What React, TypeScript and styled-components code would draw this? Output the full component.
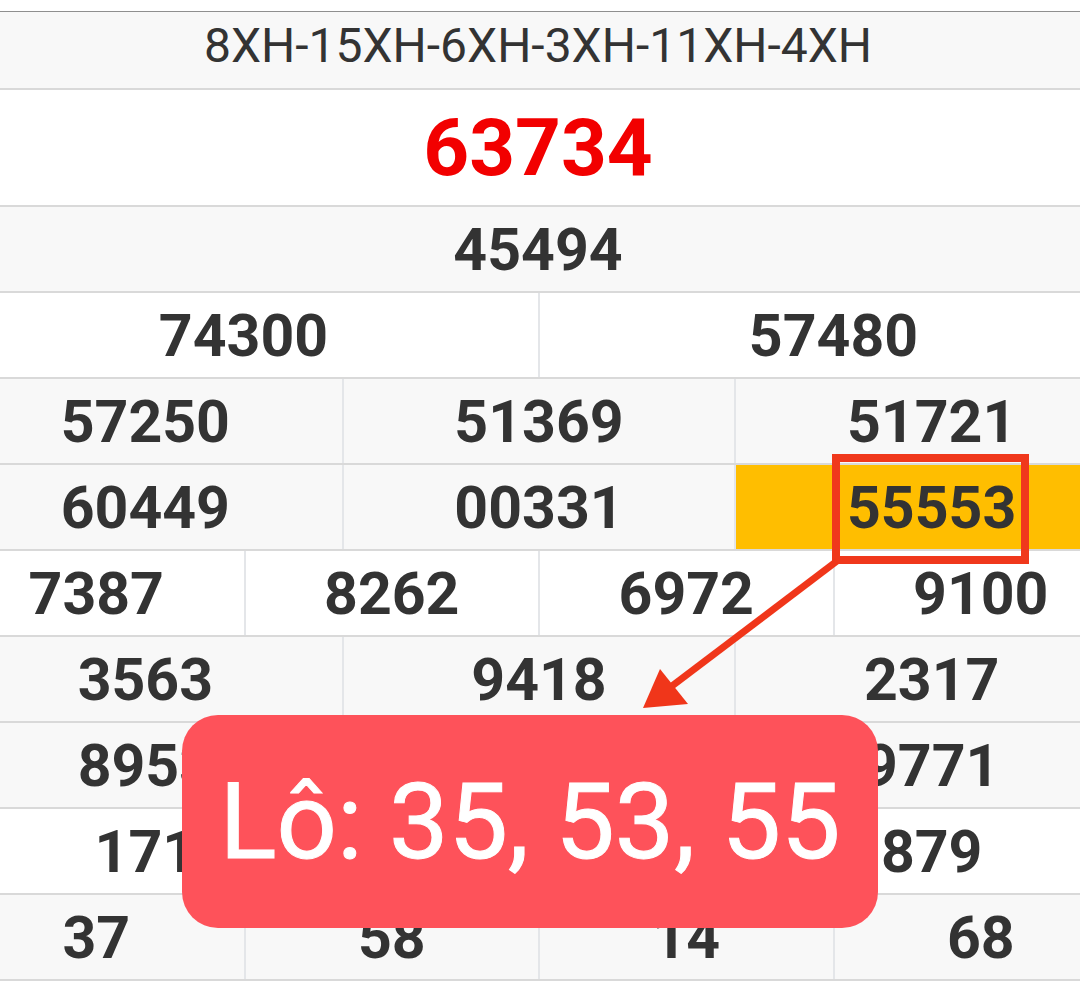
import styled, { createGlobalStyle } from 'styled-components';

const GlobalStyle = createGlobalStyle`
  html, body {
    margin: 0;
    padding: 0;
    background: #ffffff;
  }
  * {
    box-sizing: border-box;
  }
`;

const S = {
  Screen: styled.div`
    position: relative;
    width: 1080px;
    height: 987px;
    overflow: hidden;
    background-color: #ffffff;
    font-family: Roboto, 'Noto Sans', 'Liberation Sans', sans-serif;
    color: #333333;
  `,

  TopGap: styled.div`
    height: 12px;
    border-bottom: 1px solid #8f8f8f;
  `,

  Table: styled.div`
    display: flex;
    flex-direction: column;
    width: 1178px;
    margin-left: -51px;
  `,

  CodeRow: styled.div`
    display: flex;
    justify-content: center;
    align-items: center;
    height: 78px;
    padding-bottom: 10px;
    border-bottom: 2px solid #d9d9d9;
    background-color: #f8f8f8;
    font-size: 48px;
    font-weight: 400;
    color: #333333;
  `,

  SpecialRow: styled.div`
    display: flex;
    justify-content: center;
    align-items: center;
    height: 117px;
    border-bottom: 2px solid #d9d9d9;
    background-color: #ffffff;
    font-size: 80px;
    font-weight: 700;
    color: #f20000;
  `,

  Row: styled.div<{ $cols: number; $gray: boolean }>`
    display: grid;
    grid-template-columns: repeat(${({ $cols }) => $cols}, 1fr);
    height: 86px;
    border-bottom: 2px solid #d9d9d9;
    background-color: ${({ $gray }) => ($gray ? '#f8f8f8' : '#ffffff')};
  `,

  Cell: styled.div<{ $hit?: boolean }>`
    display: flex;
    justify-content: center;
    align-items: center;
    font-size: 59px;
    font-weight: 700;
    color: #333333;
    background-color: ${({ $hit }) => ($hit ? '#ffbe00' : 'transparent')};

    &:not(:first-child) {
      border-left: 2px solid #e4e6e9;
    }
  `,

  MarkBox: styled.div`
    position: absolute;
    left: 832px;
    top: 454px;
    width: 197px;
    height: 110px;
    border: 8px solid #f0381c;
  `,

  Arrow: styled.svg`
    position: absolute;
    left: 0;
    top: 0;
    pointer-events: none;
  `,

  Badge: styled.div`
    position: absolute;
    left: 182px;
    top: 715px;
    width: 696px;
    height: 213px;
    display: flex;
    justify-content: center;
    align-items: center;
    border-radius: 36px;
    background-color: #fe525a;
    color: #ffffff;
    font-size: 106px;
    font-weight: 400;
    -webkit-text-stroke: 1px #ffffff;
  `,
};

type Prize = { numbers: string[]; gray: boolean };

// the middle cells of two rows are covered by the badge in the shot
const rows: Prize[] = [
  { numbers: ['45494'], gray: true },
  { numbers: ['74300', '57480'], gray: false },
  { numbers: ['57250', '51369', '51721'], gray: true },
  { numbers: ['60449', '00331', '55553'], gray: true },
  { numbers: ['7387', '8262', '6972', '9100'], gray: false },
  { numbers: ['3563', '9418', '2317'], gray: true },
  { numbers: ['8953', '', '9771'], gray: true },
  { numbers: ['171', '', '879'], gray: false },
  { numbers: ['37', '58', '14', '68'], gray: true },
];

function App() {
  return (
    <>
      <GlobalStyle />
      <S.Screen>
        <S.TopGap />
        <S.Table>
          <S.CodeRow>8XH-15XH-6XH-3XH-11XH-4XH</S.CodeRow>
          <S.SpecialRow>63734</S.SpecialRow>
          {rows.map((row, i) => (
            <S.Row key={i} $cols={row.numbers.length} $gray={row.gray}>
              {row.numbers.map((n, j) => (
                <S.Cell key={j} $hit={n === '55553'}>
                  {n}
                </S.Cell>
              ))}
            </S.Row>
          ))}
        </S.Table>

        <S.MarkBox />
        <S.Arrow width="1080" height="987" viewBox="0 0 1080 987">
          <line
            x1="837"
            y1="561"
            x2="668"
            y2="689"
            stroke="#f0361a"
            strokeWidth="7"
          />
          <polygon points="643,708 660,669 688,704" fill="#f0361a" />
        </S.Arrow>
        <S.Badge>Lô: 35, 53, 55</S.Badge>
      </S.Screen>
    </>
  );
}

export default App;
